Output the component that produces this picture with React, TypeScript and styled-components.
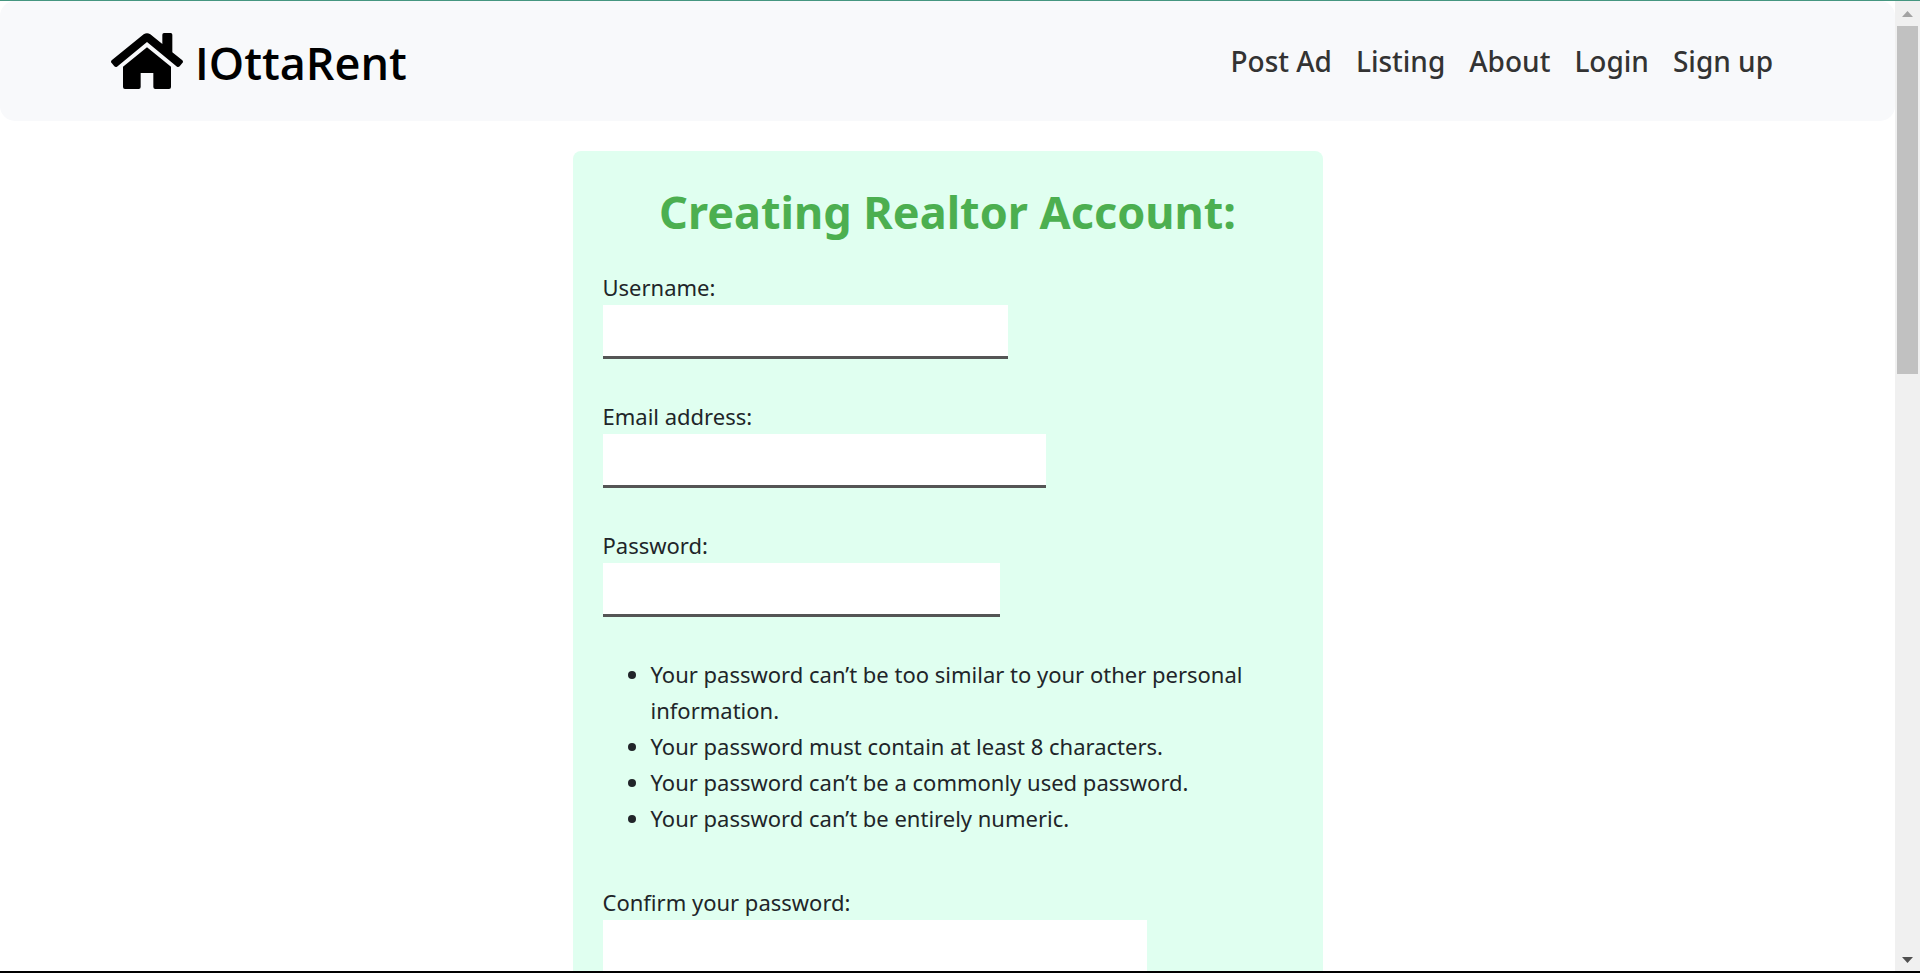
import React, { useId } from 'react';
import styled, { createGlobalStyle } from 'styled-components';

const GlobalStyle = createGlobalStyle`
  *, *::before, *::after { box-sizing: border-box; }
  body {
    margin: 0;
    background: #fff;
    color: #212529;
    font-family: 'Segoe UI', 'Noto Sans', sans-serif;
    font-size: 22px;
    line-height: 36px;
  }
`;

const Window = styled.div`
  display: flex;
  height: 100vh;
  border-top: 1px solid #459680;
  border-bottom: 2px solid #000;
`;

const Page = styled.div`
  flex: 1;
  min-width: 0;
  overflow: hidden;
`;

const Navbar = styled.header`
  display: flex;
  align-items: center;
  justify-content: space-between;
  height: 120px;
  padding: 0 122px 0 111px;
  border-radius: 15px;
  background: #f8f9fb;
`;

const Brand = styled.a`
  display: flex;
  align-items: center;
  gap: 12px;
  color: #000;
  font-family: 'Segoe UI', 'Open Sans', sans-serif;
  font-size: 45px;
  font-weight: 600;
  line-height: 60px;
  text-decoration: none;
`;

const BrandName = styled.span`
  padding-top: 4px;
`;

const HouseIcon = styled.svg`
  width: 72px;
  height: 56px;
`;

const NavLinks = styled.nav`
  display: flex;
  gap: 24px;
`;

const NavLink = styled.a`
  color: #333;
  font-size: 28px;
  font-weight: 500;
  text-decoration: none;
`;

const Card = styled.main`
  width: 750px;
  max-width: 100%;
  margin: 30px auto;
  padding: 30px;
  border-radius: 8px;
  background: #e0fff0;
`;

const Title = styled.h1`
  margin: 0 0 27px;
  color: #4caf50;
  font-size: 45px;
  font-weight: 700;
  line-height: 61px;
  text-align: center;
`;

const FieldGroup = styled.div`
  margin-bottom: 39px;
`;

const Label = styled.label`
  display: block;
`;

const TextInput = styled.input<{ $width: number }>`
  display: block;
  width: ${({ $width }) => $width}px;
  max-width: 100%;
  height: 54px;
  padding: 8px 12px;
  border: 0;
  border-bottom: 3px solid #555;
  background: #fff;
  font: inherit;
  outline: none;
`;

const Rules = styled.ul`
  margin: 0 0 48px;
  padding-left: 48px;
`;

const Scrollbar = styled.aside`
  display: flex;
  flex-direction: column;
  width: 25px;
  padding: 0 2px;
  background: #f0f0f0;
`;

const Arrow = styled.svg`
  flex: none;
  width: 21px;
  height: 25px;
`;

const Thumb = styled.div`
  flex: 348;
  background: #c1c1c1;
`;

const Track = styled.div`
  flex: 572;
`;

const links = ['Post Ad', 'Listing', 'About', 'Login', 'Sign up'];

const rules = [
  'Your password can’t be too similar to your other personal information.',
  'Your password must contain at least 8 characters.',
  'Your password can’t be a commonly used password.',
  'Your password can’t be entirely numeric.',
];

interface FieldProps {
  label: string;
  type: string;
  width: number;
}

function Field({ label, type, width }: FieldProps) {
  const id = useId();
  return (
    <FieldGroup>
      <Label htmlFor={id}>{label}</Label>
      <TextInput id={id} type={type} $width={width} />
    </FieldGroup>
  );
}

export default function App() {
  return (
    <Window>
      <GlobalStyle />
      <Page>
        <Navbar>
          <Brand href="#">
            <HouseIcon viewBox="0 0 216 168" aria-hidden="true">
              <path d="M98 4Q108-3 118 4L154 33V5Q154 0 159 0H179Q184 0 184 5V58L214 82Q218 86 214 90L206 100Q202 104 198 101L108 27 18 101Q14 104 10 100L2 90Q-2 86 2 82Z" />
              <path d="M108 43 180 101V162Q180 168 174 168H133Q127 168 127 162V120H89V162Q89 168 83 168H42Q36 168 36 162V101Z" />
            </HouseIcon>
            <BrandName>IOttaRent</BrandName>
          </Brand>
          <NavLinks>
            {links.map((link) => (
              <NavLink key={link} href="#">{link}</NavLink>
            ))}
          </NavLinks>
        </Navbar>
        <Card>
          <Title>Creating Realtor Account:</Title>
          <form>
            <Field label="Username:" type="text" width={405} />
            <Field label="Email address:" type="email" width={443} />
            <Field label="Password:" type="password" width={397} />
            <Rules>
              {rules.map((rule) => (
                <li key={rule}>{rule}</li>
              ))}
            </Rules>
            <Field label="Confirm your password:" type="password" width={544} />
          </form>
        </Card>
      </Page>
      <Scrollbar aria-hidden="true">
        <Arrow viewBox="0 0 21 25"><path d="M5 16 10.500 10 16 16Z" fill="#a3a3a3" /></Arrow>
        <Thumb />
        <Track />
        <Arrow viewBox="0 0 21 25"><path d="M5 11H16L10.500 17Z" fill="#505050" /></Arrow>
      </Scrollbar>
    </Window>
  );
}
